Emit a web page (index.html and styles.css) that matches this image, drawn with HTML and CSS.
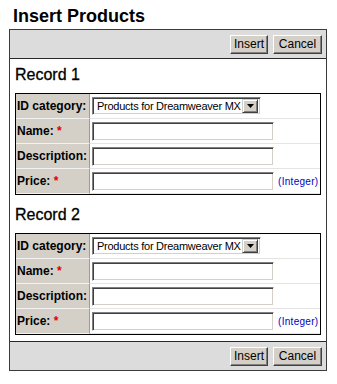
FILE: index.html
```html
<!DOCTYPE html>
<html lang="en">
<head>
    <meta charset="UTF-8">
    <title>Insert Products</title>
    <link rel="stylesheet" href="styles.css">
</head>
<body>
    <h1 class="page-title">Insert Products</h1>

    <form class="panel">
        <div class="toolbar">
            <button type="button" class="btn btn-insert">Insert</button>
            <button type="button" class="btn btn-cancel">Cancel</button>
        </div>

        <div class="records">
            <div class="record">
                <h2 class="record-title">Record 1</h2>
                <table class="record-table">
                    <tr>
                        <td class="label">ID category:</td>
                        <td class="field">
                            <div class="fake-select">
                                <span class="fake-select-text">Products for Dreamweaver MX</span>
                                <span class="fake-select-btn">
                                    <svg width="7" height="4" viewBox="0 0 7 4"><path d="M0 0h7L3.5 4z" fill="#000"/></svg>
                                </span>
                            </div>
                        </td>
                    </tr>
                    <tr>
                        <td class="label">Name: <span class="req">*</span></td>
                        <td class="field"><input type="text" class="text-input"></td>
                    </tr>
                    <tr>
                        <td class="label">Description:</td>
                        <td class="field"><input type="text" class="text-input"></td>
                    </tr>
                    <tr>
                        <td class="label">Price: <span class="req">*</span></td>
                        <td class="field"><input type="text" class="text-input"><span class="hint">(Integer)</span></td>
                    </tr>
                </table>
            </div>

            <div class="record">
                <h2 class="record-title">Record 2</h2>
                <table class="record-table">
                    <tr>
                        <td class="label">ID category:</td>
                        <td class="field">
                            <div class="fake-select">
                                <span class="fake-select-text">Products for Dreamweaver MX</span>
                                <span class="fake-select-btn">
                                    <svg width="7" height="4" viewBox="0 0 7 4"><path d="M0 0h7L3.5 4z" fill="#000"/></svg>
                                </span>
                            </div>
                        </td>
                    </tr>
                    <tr>
                        <td class="label">Name: <span class="req">*</span></td>
                        <td class="field"><input type="text" class="text-input"></td>
                    </tr>
                    <tr>
                        <td class="label">Description:</td>
                        <td class="field"><input type="text" class="text-input"></td>
                    </tr>
                    <tr>
                        <td class="label">Price: <span class="req">*</span></td>
                        <td class="field"><input type="text" class="text-input"><span class="hint">(Integer)</span></td>
                    </tr>
                </table>
            </div>
        </div>

        <div class="toolbar toolbar-bottom">
            <button type="button" class="btn btn-insert">Insert</button>
            <button type="button" class="btn btn-cancel">Cancel</button>
        </div>
    </form>
</body>
</html>
```

FILE: styles.css
```css
* {
    margin: 0;
    padding: 0;
    box-sizing: border-box;
}

body {
    font-family: "Liberation Sans", Arial, sans-serif;
    background: #fff;
    color: #000;
}

.page-title {
    font-size: 18px;
    font-weight: bold;
    line-height: 22px;
    padding: 5px 0 0 13px;
    margin-bottom: 2px;
}

/* main box */
.panel {
    width: 318px;
    margin-left: 9px;
    border: 1px solid #3a3a3a;
}

.toolbar {
    height: 29px;
    background: #dcdcdc;
    border-bottom: 1px solid #2a2a2a;
    display: flex;
    justify-content: flex-end;
    align-items: flex-start;
    gap: 5px;
    padding: 5px 4px 0 0;
}

.toolbar-bottom {
    border-bottom: none;
    border-top: 1px solid #2a2a2a;
}

.btn {
    height: 19px;
    font-family: "Liberation Sans", Arial, sans-serif;
    font-size: 12px;
    line-height: 15px;
    color: #000;
    background: #d4d0c8;
    border: 1px solid;
    border-color: #fff #404040 #404040 #fff;
    box-shadow: inset -1px -1px 0 #808080;
    padding: 0;
}

.btn-insert {
    width: 38px;
}

.btn-cancel {
    width: 49px;
}

.records {
    padding-bottom: 2px;
}

.record {
    padding: 6px 0 4px;
}

.record-title {
    font-size: 16px;
    font-weight: normal;
    line-height: 20px;
    padding-left: 5px;
    margin-bottom: 8px;
    -webkit-text-stroke: 0.3px #000;
}

.record-table {
    width: 306px;
    margin-left: 5px;
    border: 1px solid #000;
    border-collapse: separate;
    border-spacing: 0;
}

.record-table td {
    height: 25px;
    border-bottom: 1px solid #e4e4e4;
    padding: 0;
    vertical-align: middle;
}

.label {
    width: 74px;
    background: #d4d0c8;
    border-right: 1px solid #a09c94;
    font-size: 12px;
    font-weight: bold;
    padding-left: 1px !important;
    white-space: nowrap;
    border-bottom-color: #f2f2f2 !important;
}

.req {
    color: #e00000;
}

.field {
    padding-left: 2px !important;
    white-space: nowrap;
}

.text-input {
    width: 182px;
    height: 19px;
    vertical-align: middle;
    border: 1px solid;
    border-color: #808080 #fff #fff #808080;
    box-shadow: inset 1px 1px 0 #404040, inset -1px -1px 0 #d4d0c8;
    background: #fff;
    outline: none;
}

.hint {
    font-size: 10px;
    color: #0000c0;
    margin-left: 4px;
    vertical-align: middle;
    letter-spacing: 0.3px;
}

/* dropdown drawn like the old windows control */
.fake-select {
    width: 169px;
    height: 18px;
    display: flex;
    align-items: center;
    border: 1px solid;
    border-color: #808080 #fff #fff #808080;
    box-shadow: inset 1px 1px 0 #404040, inset -1px -1px 0 #d4d0c8;
    background: #fff;
    padding: 2px;
}

.fake-select-text {
    flex: 1;
    font-size: 11px;
    letter-spacing: -0.25px;
    padding-left: 2px;
    white-space: nowrap;
}

.fake-select-btn {
    width: 16px;
    height: 14px;
    flex-shrink: 0;
    display: flex;
    align-items: center;
    justify-content: center;
    background: #d4d0c8;
    border: 1px solid;
    border-color: #d4d0c8 #404040 #404040 #d4d0c8;
    box-shadow: inset 1px 1px 0 #fff, inset -1px -1px 0 #808080;
}
```
